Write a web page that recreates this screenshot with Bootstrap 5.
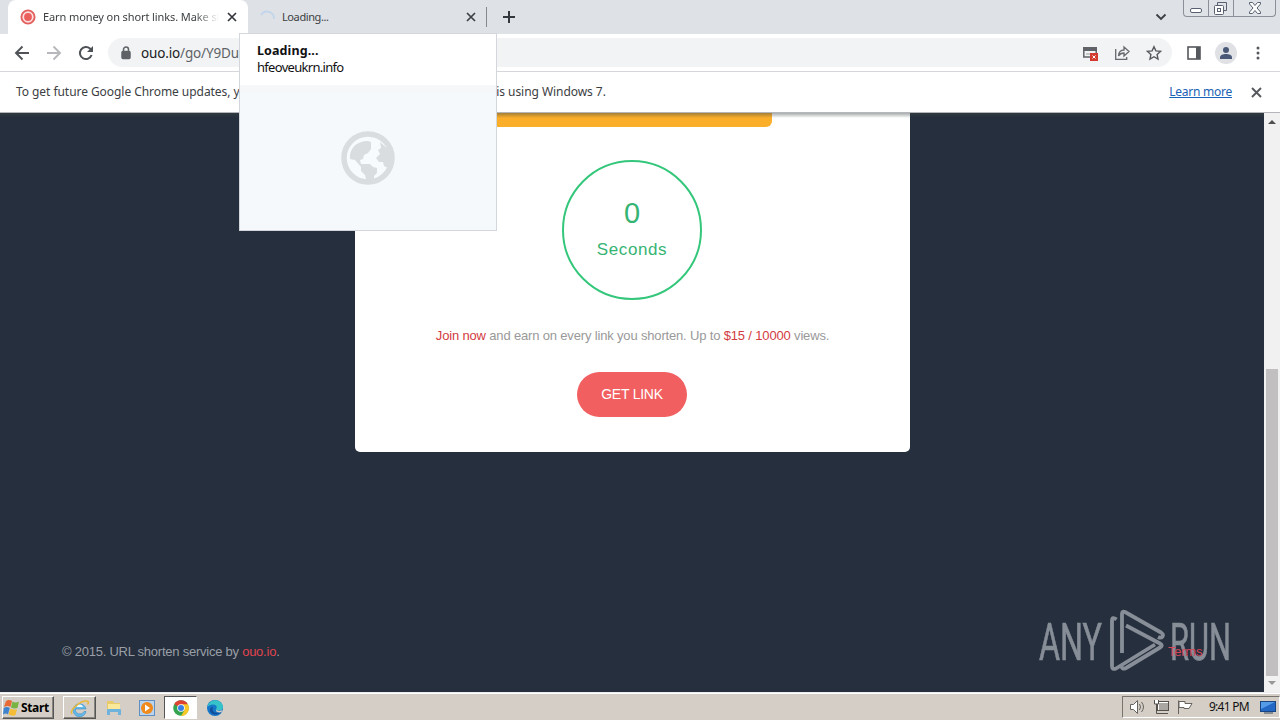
<!DOCTYPE html>
<html lang="en">
<head>
<meta charset="utf-8">
<meta name="viewport" content="width=device-width, initial-scale=1">
<title>Earn money on short links</title>
<link href="https://cdn.jsdelivr.net/npm/bootstrap@5.3.0/dist/css/bootstrap.min.css" rel="stylesheet">
<style>
body{width:1280px;height:720px;font:12px/16px "Noto Sans","Open Sans",sans-serif;color:#3c4043;background:#fff}
svg{display:block;flex:none}
.tabstrip{height:34px;background:#dee1e6}
.tab-on{width:240px;height:34px;margin-left:8px;padding-left:12px;background:#fff;border-radius:8px 8px 0 0}
.tab-off{width:239px;height:34px;padding-left:11px}
.tab-text{font-size:11px;color:#3c4043;white-space:nowrap;overflow:hidden}
.fade-end{width:176px;letter-spacing:-.1px;-webkit-mask-image:linear-gradient(90deg,#000 86%,transparent);mask-image:linear-gradient(90deg,#000 86%,transparent)}
.winbtns{width:93px;height:17px;border:1px solid #8b8f97;border-top:0;border-radius:0 0 4px 4px;background:#dfe2e7}
.toolbar{height:38px;border-bottom:1px solid #d5d7da}
.omnibox{width:1064px;height:29px;border-radius:15px;background:#f1f3f4;padding-left:12px}
.url{font-size:13.5px;letter-spacing:-.15px;color:#5f6368}
.url b{font-weight:400;color:#202124}
.infobar{height:41px;padding:0 18px 0 16px;border-bottom:1px solid #b4b6b9;color:#3c4043;letter-spacing:-.055px}
.infobar a{color:#1a62b5;letter-spacing:-.25px}
.viewport{height:579px}
.page{background:#252f3d;font-family:"Liberation Sans",Arial,sans-serif}
.topshade{left:0;top:0;width:1264px;height:5px;background:linear-gradient(rgba(60,70,70,.45),transparent)}
.sheet{width:555px;height:339px;background:#fff;border-radius:0 0 5px 5px;margin-left:355px}
.banner{width:280px;height:14px;margin-left:137px;background:#fbae29;border-radius:0 0 6px 6px}
.timer{width:140px;height:140px;margin:33px 0 0 207px;border:2px solid #34c77b;border-radius:50%;color:#36b473}
.timer .count{font-size:29px;line-height:32px;margin-top:35px}
.timer .unit{font-size:17px;line-height:20px;margin-top:11px;letter-spacing:.6px}
.promo{margin-top:28px;line-height:16px;font-size:13px;color:#999;white-space:nowrap;letter-spacing:-.165px}
.red{color:#d33b41}
.getlink{width:110px;height:45px;margin:28px 0 0 222px;background:#f15f60;color:#fff;border:0;border-radius:23px;font-size:14px;letter-spacing:-.25px;padding:0 0 2px}
.foot{margin:192px 61px 0 62px;font-size:13px;color:#9a9fa7;height:16px;letter-spacing:-.24px}
.foot .red{color:#e0454f}
.foot .terms{color:#d7475a;width:35px;position:relative;z-index:1}
.brand{left:1036px;top:494px}
.scroll{width:16px;background:#f1f1f1}
.thumb{width:12px;height:307px;background:#c1bfbf;margin-top:242px}
.taskbar{height:28px;background:#d4cec6;border-top:1px solid #eee;box-shadow:inset 0 1px #fff;padding-top:3px}
.raised{border:1px solid;border-color:#fff #555 #555 #fff;box-shadow:inset -1px -1px #88847e}
.start{width:52px;height:23px;margin-left:2px;font:bold 12px/20px "Noto Sans",sans-serif;letter-spacing:-.35px;color:#000}
.tbtn{width:33px;height:23px}
.sunken{border:1px solid;border-color:#555 #fff #fff #555;background:#fff}
.tray{width:158px;height:22px;border:1px solid;border-color:#77736e #fff #fff #77736e;color:#111;font-size:12px;letter-spacing:-.75px}
.preview{left:239px;top:33px;width:258px;height:198px;background:#fff;border:1px solid #d3d7db;z-index:5;color:#111}
.preview .txt{height:51px;padding:9px 0 0 17px;font-size:13px;line-height:16px;letter-spacing:-.7px}
.preview .txt b{font-size:12.5px;letter-spacing:.1px}
.thumbnail{height:145px;background:#f5f9fc;box-shadow:inset 0 8px #f6f7f8}
</style>
</head>
<body class="d-flex flex-column overflow-hidden position-relative">

<header>
  <div class="tabstrip d-flex align-items-center">
    <div class="tab-on d-flex align-items-center">
      <svg width="16" height="16" viewBox="0 0 16 16"><circle cx="8" cy="8" r="6.6" fill="#fbdede" stroke="#e2615f" stroke-width="1.9"/><circle cx="8" cy="8" r="3.9" fill="#ea5e5c"/></svg>
      <div class="tab-text fade-end" style="margin-left:7px">Earn money on short links. Make sho</div>
      <svg class="ms-2" width="10" height="10" viewBox="0 0 10 10" stroke="#33363b" stroke-width="1.7"><path d="M1 1l8 8M9 1L1 9"/></svg>
    </div>
    <div class="tab-off d-flex align-items-center">
      <svg width="17" height="17" viewBox="0 0 17 17" fill="none"><path d="M2 6a7 7 0 0 1 13 4" stroke="#c2d5eb" stroke-width="1.8"/></svg>
      <span class="tab-text" style="margin-left:6px;letter-spacing:-.4px">Loading...</span>
      <svg class="ms-auto" style="margin-right:7px" width="10" height="10" viewBox="0 0 10 10" stroke="#3c4047" stroke-width="1.7"><path d="M1 1l8 8M9 1L1 9"/></svg>
      <svg width="4" height="20"><path d="M3 0v20" stroke="#85888e" transform="translate(.5 0)"/></svg>
    </div>
    <svg style="margin-left:15px" width="14" height="14" stroke="#33373e" stroke-width="2"><path d="M7 1v12M1 7h12"/></svg>
    <svg style="margin-left:639px" width="12" height="8" fill="none" stroke="#3c4047" stroke-width="1.9"><path d="M1.5 1.5L6 6l4.500-4.500"/></svg>
    <div class="winbtns align-self-start" style="margin-left:16px">
      <svg width="91" height="16" fill="none" stroke="#596170"><path d="M24.500 0v16M49.500 0v16" stroke="#8b8f97"/><rect x="6.500" y="8.500" width="11" height="4" rx="1.500" fill="#fff"/><path d="M33.500 5.500V2.500h9v8h-3"/><rect x="30.500" y="5.500" width="9" height="9" rx="1" fill="#fff"/><rect x="33.500" y="8.500" width="3" height="3"/><path d="M65.500 2.500h3l2.500 3 2.500-3h3v1.500L73 8l3.500 4v1.500h-3l-2.500-3-2.500 3h-3V12L69 8l-3.500-4z" fill="#fff"/></svg>
    </div>
  </div>

  <div class="toolbar d-flex align-items-center">
    <svg style="margin-left:14px" width="16" height="16" fill="none" stroke="#4f5358" stroke-width="1.9"><path d="M15 8H2.500M8.500 1.500L2 8l6.500 6.500"/></svg>
    <svg style="margin-left:16px" width="16" height="16" fill="none" stroke="#b6b8bb" stroke-width="1.9"><path d="M1 8h12.500M7.500 1.500L14 8l-6.500 6.500"/></svg>
    <svg style="margin-left:16px" width="16" height="16" fill="none" stroke="#4f5358" stroke-width="2"><path d="M13.600 10A6 6 0 1 1 12 3.600L14 5.500"/><path d="M15 1v6H9z" fill="#4f5358" stroke="none"/></svg>
    <div class="omnibox d-flex align-items-center" style="margin-left:14px">
      <svg width="12" height="14" fill="none" stroke="#5f6368"><rect x="2" y="5.500" width="8" height="7" rx="1" fill="#5f6368" stroke-width="1.500"/><path d="M3.500 6V3.500a2.500 2.500 0 0 1 5 0V6" stroke-width="1.500"/></svg>
      <span class="url" style="margin-left:9px"><b>ouo.io</b>/go/Y9Du</span>
      <div class="d-flex align-items-center ms-auto" style="gap:16px;margin-right:10px">
        <svg width="16" height="16"><path d="M1.800 4h12.400v8H1.800z" fill="none" stroke="#5f6368" stroke-width="1.500"/><path d="M1 2h14v4H1z" fill="#5f6368"/><path d="M4 9h5" stroke="#999"/><path d="M8 8h8v8H8z" fill="#d43a30"/><path d="M10.500 10.500l3 3m0-3l-3 3" stroke="#fff"/></svg>
        <svg width="16" height="16" fill="none" stroke="#66696e" stroke-width="1.300"><path d="M1.700 4v10.300h11V12M4.500 11c.3-4 2.500-6 5.500-6V2l5 4.500-5 4.500V8c-2.500 0-4.300 1-5.500 3z"/></svg>
        <svg width="16" height="16" fill="none" stroke="#56595e" stroke-width="1.400"><path d="M8 1.700l1.900 4.200 4.600.5-3.400 3.100.9 4.500-4-2.300L4 14l.9-4.500-3.400-3.100 4.600-.5z"/></svg>
      </div>
    </div>
    <svg style="margin-left:15px" width="14" height="14"><rect x="1" y="1" width="12" height="12" fill="none" stroke="#55585d" stroke-width="1.600"/><path d="M9 1h4v12H9z" fill="#55585d"/></svg>
    <svg style="margin-left:14px" width="22" height="22"><circle cx="11" cy="11" r="11" fill="#dfe1e5"/><circle cx="11" cy="8" r="3" fill="#4a5877"/><path d="M5 17v-1.500c0-4.600 12-4.600 12 0V17z" fill="#4a5877"/></svg>
    <svg style="margin-left:18px" width="6" height="14" fill="#55585d"><circle cx="3" cy="2" r="1.500"/><circle cx="3" cy="7" r="1.500"/><circle cx="3" cy="12" r="1.500"/></svg>
  </div>

  <div class="infobar d-flex align-items-center">
    <span class="text-nowrap">To get future Google Chrome updates, you'll need Windows 10 or later. This computer is using Windows 7.</span>
    <a class="ms-auto" href="#">Learn more</a>
    <svg style="margin-left:19px" width="11" height="11" stroke="#55585d" stroke-width="1.900"><path d="M1 1l9 9M10 1l-9 9"/></svg>
  </div>
</header>

<div class="viewport d-flex position-relative">
  <main class="page flex-grow-1">
    <section class="sheet overflow-hidden">
      <div class="banner"></div>
      <div class="timer text-center overflow-hidden"><div class="count">0</div><div class="unit">Seconds</div></div>
      <p class="promo text-center mb-0"><span class="red">Join now</span> and earn on every link you shorten. Up to <span class="red">$15 / 10000</span> views.</p>
      <button class="getlink d-block">GET LINK</button>
    </section>
    <footer class="foot d-flex justify-content-between"><span>© 2015. URL shorten service by <span class="red">ouo.io</span>.</span><span class="terms">Terms</span></footer>
  </main>
  <div class="topshade position-absolute"></div>
  <svg class="brand position-absolute" width="200" height="68" fill="#8e949d" opacity=".94">
    <g font-family="Roboto, sans-serif" font-size="52" stroke="#8e949d" stroke-width=".7"><text x="3" y="53" textLength="63" lengthAdjust="spacingAndGlyphs">ANY</text><text x="134" y="53" textLength="61" lengthAdjust="spacingAndGlyphs">RUN</text></g>
    <g fill="none" stroke="#8e949d" stroke-width="3.800" stroke-linejoin="round"><path d="M80.500 12.500Q76 9 76 14V59q0 4 4 2.500L119 37.500"/><path d="M86 46V7q0-3.500 3-2L125 25.500q3 2 1.500 4t-4.500.5"/><path d="M90 18.500L124 36.500q3.500 2 0 4L90 61q-4 2-4.500-2"/></g>
  </svg>
  <aside class="scroll d-flex flex-column align-items-center">
    <svg class="mt-1" width="10" height="10"><path d="M1 7l4-4 4 4z" fill="#505050"/></svg>
    <div class="thumb"></div>
    <svg width="10" height="12"><path d="M1 5l4 4 4-4z" fill="#989898"/></svg>
  </aside>
</div>

<footer class="taskbar d-flex align-items-start">
  <div class="start raised d-flex align-items-center">
    <svg width="16" height="18" viewBox="0 0 16 18"><path d="M3 2q3-2 6 0L7.500 8Q5 6 1 8z" fill="#e76a36"/><path d="M9.500 2.500q3 2 6.500 0L14.500 9Q11 10 8 8.500z" fill="#79b443"/><path d="M.8 9q3-2 6 0L5 15.500q-2-2-5 0z" fill="#3e83cd"/><path d="M7.500 9.500q3 2 6.500.5L12.500 16q-3 1.500-7-.5z" fill="#f5bd35"/></svg>
    <span style="margin-left:2px">Start</span>
  </div>
  <div class="tbtn raised d-flex align-items-center justify-content-center" style="margin-left:9px">
    <svg width="20" height="18" fill="none"><path d="M15.500 10H5.500a4.500 4.500 0 0 0 8.500 2.500h2A6.500 6.500 0 1 1 16 10z" fill="#65b9e8" stroke="#3a8cc5" stroke-width=".6"/><path d="M6.500 8h6.500a3.400 3.400 0 0 0-6.500 0z" fill="#eef7fc"/><path d="M2 15C-1 11 12 0 18 2.500q1 1-.5 3" stroke="#e9b93a" stroke-width="1.500"/></svg>
  </div>
  <div class="tbtn d-flex align-items-center justify-content-center" style="margin-left:1px">
    <svg width="18" height="18"><path d="M2 2h6l1 2h6v9H2z" fill="#e9ca68"/><path d="M3 5h12v6H3z" fill="#fae89a"/><path d="M2 16v-5q0-1 1-1h12q1 0 1 1v5h-3v-3H5v3z" fill="#6fb3dc"/></svg>
  </div>
  <div class="tbtn d-flex align-items-center justify-content-center">
    <svg width="18" height="18"><rect x="1.500" y="1.500" width="15" height="15" fill="#b9d4ee" stroke="#638ec0"/><circle cx="9" cy="9" r="6" fill="#f18a1c"/><path d="M7 5.500v7l5-3.500z" fill="#fff"/></svg>
  </div>
  <div class="tbtn sunken d-flex align-items-center justify-content-center" style="margin-left:1px">
    <svg width="16" height="16" viewBox="0 0 16 16"><circle cx="8" cy="8" r="7.800" fill="#34a450"/><path d="M8 8L1.200 4.200A7.800 7.800 0 0 1 14.800 4.200z" fill="#df4132"/><path d="M8 16A7.800 7.800 0 0 0 14.800 4.200H8L11.500 10z" fill="#f9c727"/><circle cx="8" cy="8" r="3.800" fill="#fff"/><circle cx="8" cy="8" r="3" fill="#397fe5"/></svg>
  </div>
  <div class="tbtn d-flex align-items-center justify-content-center" style="margin-left:1px">
    <svg width="18" height="18"><circle cx="9" cy="9" r="8" fill="#1676c8"/><path d="M1.500 8C3-1 16-1 17 8c0 4-6 4.500-7 2 2-2 0-4.500-3-4.500S2 7 1.500 8z" fill="#35c3c9"/><path d="M7 8c-2 5 3 7 8 5-4 5-12 2-11-3 .5-1.500 2-2 3-2z" fill="#124e9c"/><path d="M10 10.500c1.500 2 5 1.500 6.500.5l-1 2c-3 1-6 0-5.500-2.500z" fill="#d4cec6"/></svg>
  </div>
  <div class="tray d-flex align-items-center ms-auto">
    <svg style="margin-left:6px" width="17" height="16" fill="none" stroke="#66625e"><path d="M1.500 5.500h3l4-4v13l-4-4h-3z" fill="#fff"/><path d="M10.500 5q2 3 0 6M12.500 3q4 5 0 10" /></svg>
    <svg style="margin-left:7px" width="17" height="16" fill="none" stroke="#55514d"><rect x="5.500" y="3.500" width="10" height="8" fill="#aaa7a3" stroke="#fff"/><rect x="4.500" y="2.500" width="11" height="9"/><path d="M6 14.500h9M3.500 5v9.500H6"/><path d="M1.500 1v4h4V1" fill="#fff"/></svg>
    <svg style="margin-left:7px" width="17" height="16" fill="#fff" stroke="#66625e"><path d="M1.500 15V1.500M2 2.500h6v2h7l-3 5H7v-1H2z"/></svg>
    <span style="margin-left:15px">9:41 PM</span>
    <svg class="ms-auto" style="margin-right:3px" width="16" height="15"><rect x=".5" y="1.500" width="15" height="10" fill="#2368c4" stroke="#194581"/><path d="M1 2h14L1 9z" fill="#549be8"/><path d="M4 13h9" stroke="#34495e"/></svg>
  </div>
</footer>

<div class="preview position-absolute">
  <div class="txt"><b class="d-block">Loading...</b>hfeoveukrn.info</div>
  <div class="thumbnail d-flex align-items-center justify-content-center">
    <svg width="54" height="54" viewBox="0 0 54 54"><circle cx="27" cy="27" r="24" fill="#f8fbfd" stroke="#dadddf" stroke-width="5.500"/><path d="M9 28c-1-10 6-18 18-18l3 1v7l-3 4-4 2-1 4-3 1 1 4 3 0h6l3 3 4 1v5l-3 3v6l-7 1-2-8-4-4v-4l-6-7z" fill="#dadddf"/><path d="M39 11l8 7 3 11-3 8-4-2-1-4h-4l-3-4 4-4-2-4 3-2z" fill="#dadddf"/></svg>
  </div>
</div>
<script src="https://cdn.jsdelivr.net/npm/bootstrap@5.3.0/dist/js/bootstrap.bundle.min.js"></script>
</body>
</html>
